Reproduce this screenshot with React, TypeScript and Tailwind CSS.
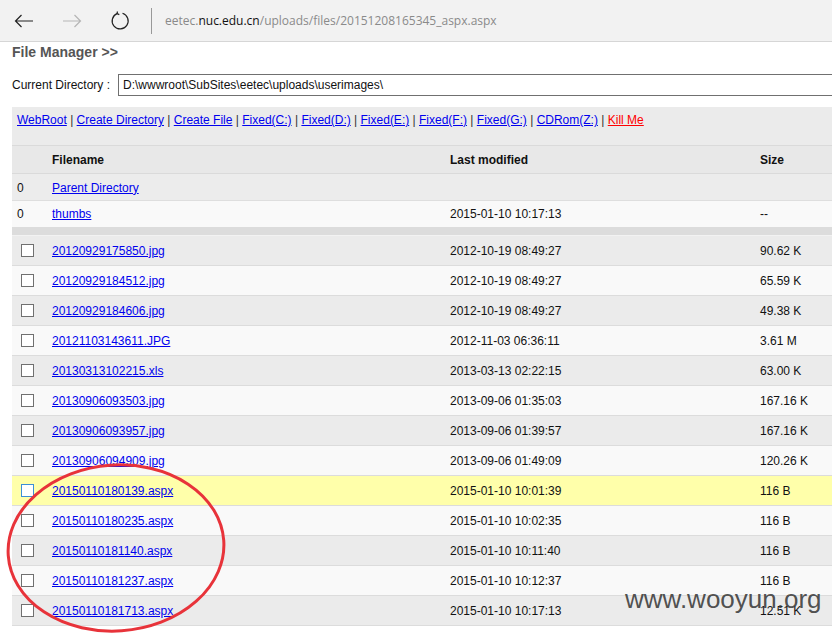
const files = [
  { name: "20120929175850.jpg", date: "2012-10-19 08:49:27", size: "90.62 K" },
  { name: "20120929184512.jpg", date: "2012-10-19 08:49:27", size: "65.59 K" },
  { name: "20120929184606.jpg", date: "2012-10-19 08:49:27", size: "49.38 K" },
  { name: "20121103143611.JPG", date: "2012-11-03 06:36:11", size: "3.61 M" },
  { name: "20130313102215.xls", date: "2013-03-13 02:22:15", size: "63.00 K" },
  { name: "20130906093503.jpg", date: "2013-09-06 01:35:03", size: "167.16 K" },
  { name: "20130906093957.jpg", date: "2013-09-06 01:39:57", size: "167.16 K" },
  { name: "20130906094909.jpg", date: "2013-09-06 01:49:09", size: "120.26 K" },
  { name: "20150110180139.aspx", date: "2015-01-10 10:01:39", size: "116 B" },
  { name: "20150110180235.aspx", date: "2015-01-10 10:02:35", size: "116 B" },
  { name: "20150110181140.aspx", date: "2015-01-10 10:11:40", size: "116 B" },
  { name: "20150110181237.aspx", date: "2015-01-10 10:12:37", size: "116 B" },
  { name: "20150110181713.aspx", date: "2015-01-10 10:17:13", size: "12.51 K" },
]

const links = ["WebRoot", "Create Directory", "Create File", "Fixed(C:)", "Fixed(D:)", "Fixed(E:)", "Fixed(F:)", "Fixed(G:)", "CDRom(Z:)"]

function BrowserBar() {
  return (
    <div className="flex h-[42px] items-center border-b border-[#d6d6d6] bg-[#f2f2f2]">
      <div className="flex w-[48px] justify-center">
        <svg width="20" height="14" viewBox="0 0 20 14" fill="none" stroke="#222" strokeWidth="1.2">
          <path d="M19 7H1.5M7.5 1L1.5 7l6 6" />
        </svg>
      </div>
      <div className="flex w-[48px] justify-center">
        <svg width="20" height="14" viewBox="0 0 20 14" fill="none" stroke="#b5b5b5" strokeWidth="1.2">
          <path d="M1 7h17.5M12.5 1l6 6-6 6" />
        </svg>
      </div>
      <div className="flex w-[48px] justify-center">
        <svg width="20" height="20" viewBox="0 0 20 20" fill="none" stroke="#222" strokeWidth="1.2">
          <path d="M7 2.6A8 8 0 1 0 12.5 2.3" />
          <path d="M7.5 0.5L7 2.6 9.3 3.6" />
        </svg>
      </div>
      <div className="ml-[7px] h-[26px] w-px bg-[#999]" />
      <div className="ml-[13px] text-[12px] text-[#8a8a8a] [font-family:'Open_Sans',sans-serif]">
        eetec.<span className="text-[#111]">nuc.edu.cn</span>/uploads/files/20151208165345_aspx.aspx
      </div>
    </div>
  )
}

function Checkbox({ hover }: { hover?: boolean }) {
  return (
    <div className={`ml-[4px] h-[13px] w-[13px] border bg-white ${hover ? "border-[#3c8fd6]" : "border-[#707070]"}`} />
  )
}

export default function App() {
  return (
    <div className="relative h-[633px] w-[832px] overflow-hidden bg-white text-[12px] text-[#111] [font-family:'Liberation_Sans',Arial,sans-serif]">
      <BrowserBar />
      <div className="pl-[12px]">
        <div className="h-[20px] text-[14px] leading-[20px] font-bold text-[#555]">File Manager &gt;&gt;</div>
        <div className="mt-[12px] flex items-center">
          <span className="w-[106px]">Current Directory :</span>
          <div className="flex h-[22px] flex-1 items-center border border-r-0 border-[#707070] pl-[4px]">
            D:\wwwroot\SubSites\eetec\uploads\userimages\
          </div>
        </div>
        <div className="mt-[11px] h-[38px] bg-[#ebebeb] pl-[5px] pt-[4px] whitespace-pre">
          {links.map((l) => (
            <span key={l}>
              <a className="text-[#0000ee] underline">{l}</a>
              <span className="text-[#333]">{" | "}</span>
            </span>
          ))}
          <a className="text-[#ff0000] underline">Kill Me</a>
        </div>
        <div className="flex h-[29px] items-center border-y border-[#dadada] bg-[#e8e8e8] font-bold">
          <div className="w-[40px]" />
          <div className="w-[398px]">Filename</div>
          <div className="w-[310px]">Last modified</div>
          <div>Size</div>
        </div>
        <div className="flex h-[27px] items-center border-b border-[#dedede] bg-[#ececec] pt-px">
          <div className="w-[40px] pl-[5px]">0</div>
          <a className="text-[#0000ee] underline">Parent Directory</a>
        </div>
        <div className="flex h-[26px] items-center bg-[#f9f9f9]">
          <div className="w-[40px] pl-[5px]">0</div>
          <div className="w-[398px]">
            <a className="text-[#0000ee] underline">thumbs</a>
          </div>
          <div className="w-[310px]">2015-01-10 10:17:13</div>
          <div>--</div>
        </div>
        <div className="h-[8px] bg-[#dcdcdc]" />
        <div className="h-px bg-[#f2f2f2]" />
        {files.map((f, i) => {
          const bg = i === 8 ? "bg-[#ffffaa]" : i % 2 === 0 ? "bg-[#ebebeb]" : "bg-[#f9f9f9]"
          return (
            <div key={f.name} className={`flex h-[30px] items-center border-b border-[#dcdcdc] ${bg}`}>
              <div className="w-[40px] pl-[5px]">
                <Checkbox hover={i === 8} />
              </div>
              <div className="w-[398px]">
                <a className="text-[#0000ee] underline">{f.name}</a>
              </div>
              <div className="w-[310px]">{f.date}</div>
              <div>{f.size}</div>
            </div>
          )
        })}
      </div>
      <div className="absolute left-[625px] top-[586px] text-[26px] leading-none text-[#3c3c3c]/90 [font-family:'Liberation_Sans',Arial,sans-serif]">
        www.wooyun.org
      </div>
      <svg className="pointer-events-none absolute left-0 top-0" width="832" height="633">
        <ellipse cx="116" cy="548" rx="108" ry="83" fill="none" stroke="#e8333a" strokeWidth="3" transform="rotate(-4 116 548)" />
      </svg>
    </div>
  )
}
